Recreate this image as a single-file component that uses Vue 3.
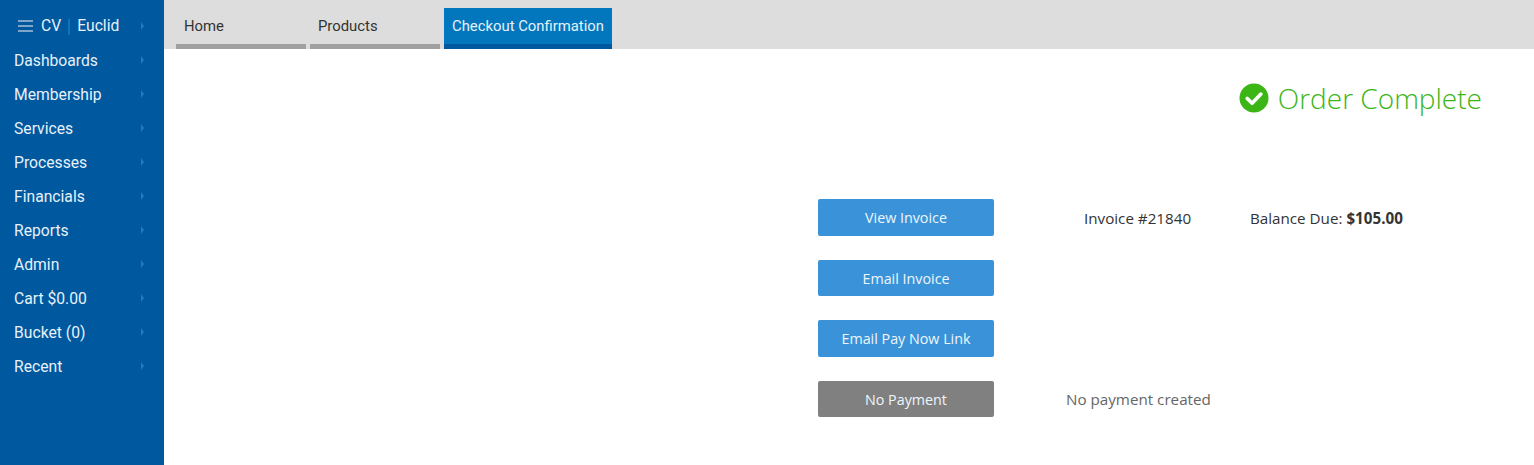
<script setup>
const menu = ['Dashboards', 'Membership', 'Services', 'Processes', 'Financials', 'Reports', 'Admin', 'Cart $0.00', 'Bucket (0)', 'Recent']
</script>

<template>
  <div class="app">
    <aside class="side">
      <div class="brand">
        <span class="burger"><i></i><i></i><i></i></span>
        <span class="cv">CV</span>
        <span class="sep"></span>
        <span class="euclid">Euclid</span>
        <span class="caret top"></span>
      </div>
      <div v-for="m in menu" :key="m" class="item">
        <span>{{ m }}</span>
        <span class="caret"></span>
      </div>
    </aside>
    <div class="main">
      <nav class="tabs">
        <div class="tab">Home</div>
        <div class="tab">Products</div>
        <div class="tab active">Checkout Confirmation</div>
      </nav>
      <section class="content">
        <h1 class="done">
          <svg width="30" height="30" viewBox="0 0 30 30">
            <circle cx="15" cy="15" r="14.5" fill="#3cb517" />
            <path d="M8.2 15.4l4.9 4.9 8.8-9.2" fill="none" stroke="#fff" stroke-width="3.6" stroke-linecap="round" stroke-linejoin="round" />
          </svg>
          <span>Order Complete</span>
        </h1>
        <div class="rows">
          <button class="btn b1">View Invoice</button>
          <span class="inv">Invoice #21840</span>
          <span class="bal">Balance Due: <b>$105.00</b></span>
          <button class="btn b2">Email Invoice</button>
          <button class="btn b3">Email Pay Now Link</button>
          <button class="btn b4 grey">No Payment</button>
          <span class="none">No payment created</span>
        </div>
      </section>
    </div>
  </div>
</template>

<style scoped>
.app { display: flex; height: 465px; overflow: hidden; background: #fff; }
.side { width: 164px; flex: none; background: #00589f; color: #fff; font: 15.7px/34px Roboto, sans-serif; }
.brand { height: 43px; padding: 9px 0 0 18px; box-sizing: border-box; display: flex; align-items: center; position: relative; }
.burger { width: 15px; display: flex; flex-direction: column; gap: 3px; margin-right: 8px; }
.burger i { display: block; height: 2px; background: #7fa6c8; }
.sep { width: 2px; height: 16px; background: #0e74bd; margin: 2px 7px 0 7px; }
.cv, .euclid { color: #e6f1fa; }
.item { height: 34px; padding-left: 14px; padding-top: 1px; box-sizing: border-box; position: relative; color: #e6f1fa; }
.caret { position: absolute; left: 141px; top: 13px; width: 0; height: 0; border-left: 3px solid #1c7cc5; border-top: 4px solid transparent; border-bottom: 4px solid transparent; }
.caret.top { top: 22px; }
.main { flex: 1; min-width: 0; display: flex; flex-direction: column; }
.tabs { height: 49px; background: #ddd; display: flex; gap: 4px; padding: 8px 0 0 12px; box-sizing: border-box; font: 14.85px/36px Roboto, sans-serif; color: #333; }
.tab { width: 130px; box-sizing: border-box; padding-left: 8px; border-bottom: 5px solid #a0a0a0; }
.tab.active { width: 168px; background: #0277bd; border-bottom-color: #00589f; color: #e6f1fa; }
.content { flex: 1; position: relative; font-family: "Open Sans", sans-serif; }
.done { margin: 0; padding: 32px 52px 0 0; display: flex; justify-content: flex-end; align-items: center; gap: 9px; font: 300 28px/34px "Open Sans", sans-serif; color: #3cb517; }
.rows { margin: 84px 0 0 654px; display: grid; grid-template-columns: 176px 176px 170px; grid-template-rows: 37px 36px 37px 36px; row-gap: 24px; align-items: center; font-size: 15.2px; color: #333; }
.btn { border: 0; border-radius: 2px; height: 100%; width: 176px; padding: 0; background: #3a93d8; color: #eef6fc; font: 14.3px "Open Sans", sans-serif; }
.btn.grey { background: #808080; }
.b1 { grid-area: 1 / 1; }
.b2 { grid-area: 2 / 1; }
.b3 { grid-area: 3 / 1; }
.b4 { grid-area: 4 / 1; }
.inv { grid-area: 1 / 2; padding-left: 90px; white-space: nowrap; margin-top: 1px; width: 0; }
.bal { grid-area: 1 / 3; padding-left: 80px; white-space: nowrap; margin-top: 1px; width: 0; }
.none { grid-area: 4 / 2; padding-left: 72px; white-space: nowrap; color: #666; width: 0; }
</style>
